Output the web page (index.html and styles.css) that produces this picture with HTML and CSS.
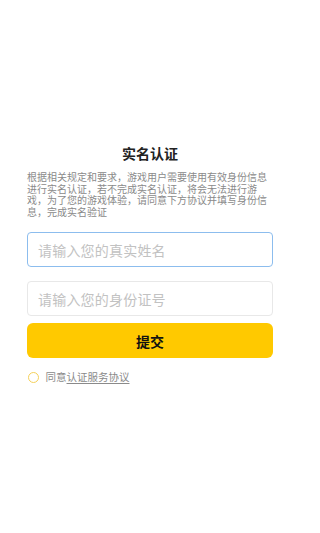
FILE: index.html
```html
<!DOCTYPE html>
<html lang="zh">
<head>
<meta charset="utf-8">
<meta name="viewport" content="width=device-width, initial-scale=1">
<title>实名认证</title>
<link rel="stylesheet" href="styles.css">
</head>
<body>
<main class="page">
  <h1 class="title">实名认证</h1>
  <p class="desc">根据相关规定和要求，游戏用户需要使用有效身份信息进行实名认证，若不完成实名认证，将会无法进行游戏，为了您的游戏体验，请同意下方协议并填写身份信息，完成实名验证</p>
  <div class="field field-active"><span class="ph">请输入您的真实姓名</span></div>
  <div class="field field-second"><span class="ph">请输入您的身份证号</span></div>
  <div class="btn">提交</div>
  <div class="agree">
    <span class="radio"></span>
    <span class="agree-text">同意<span class="link">认证服务协议</span></span>
  </div>
</main>
</body>
</html>
```
FILE: styles.css
```css
* { box-sizing: border-box; }
html, body { margin: 0; padding: 0; background: #fff; }
body {
  font-family: "Noto Sans CJK SC", "Noto Sans", sans-serif;
  width: 300px;
  height: 533px;
}
.page {
  padding: 143px 27px 0 27px;
  display: flex;
  flex-direction: column;
}
.title {
  margin: 0;
  font-size: 14px;
  line-height: 20px;
  font-weight: bold;
  color: #222;
  text-align: center;
}
.desc {
  margin: 8px 0 0 0;
  font-size: 10px;
  line-height: 11.5px;
  color: #8a8a8a;
}
.field {
  height: 35px;
  border-radius: 4px;
  border: 1px solid #e8e8e8;
  display: flex;
  align-items: center;
  padding-left: 10px;
}
.field-active {
  margin-top: 15px;
  border: 1.5px solid #8cbdee;
}
.field-second {
  margin-top: 14px;
}
.ph {
  font-size: 14px;
  color: #c2c2c2;
  letter-spacing: 0.2px;
}
.btn {
  margin-top: 7px;
  height: 35px;
  border-radius: 6px;
  background: #ffc900;
  color: #111;
  font-size: 14px;
  font-weight: bold;
  display: flex;
  align-items: center;
  justify-content: center;
}
.agree {
  margin-top: 12px;
  display: flex;
  align-items: center;
  gap: 7px;
  padding-left: 0.5px;
}
.radio {
  width: 11px;
  height: 11px;
  border-radius: 50%;
  border: 1.2px solid #f5d15a;
}
.agree-text {
  font-size: 10.5px;
  line-height: 14px;
  color: #8a8a8a;
}
.link {
  text-decoration: underline;
  text-underline-offset: 2px;
}
```
